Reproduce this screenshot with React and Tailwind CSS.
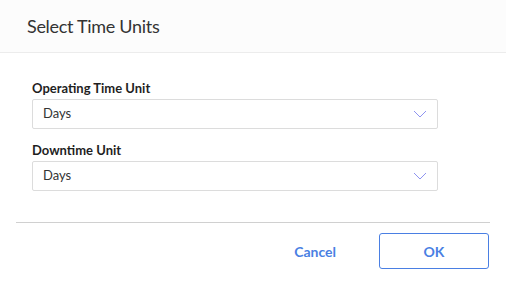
function UnitSelect({ label, value }) {
  return (
    <div className="flex flex-col">
      <div className="h-[17px] text-[13px] font-bold leading-[17px] text-[#1f1f1f]">{label}</div>
      <div className="mt-[2px] flex h-[30px] w-[406px] items-center justify-between rounded-[2px] border border-[#dcdcdc] bg-white pl-[10px] pr-[10px]">
        <span className="text-[13px] text-[#333]">{value}</span>
        <svg width="14" height="8" viewBox="0 0 14 8" fill="none" className="text-[#8e93f0]">
          <path d="M1 1l6 6 6-6" stroke="currentColor" strokeWidth="1" />
        </svg>
      </div>
    </div>
  )
}

export default function App() {
  return (
    <div className="h-[281px] w-[506px] bg-white" style={{ fontFamily: 'Lato, "Liberation Sans", sans-serif' }}>
      <div className="flex h-[53px] items-center border-b border-[#ececec] bg-[#fcfcfc] px-[27px]">
        <h1 className="text-[18px] tracking-[-0.3px] text-[#333]">Select Time Units</h1>
      </div>

      <div className="flex flex-col gap-[13px] px-[32px] pt-[27px]">
        <UnitSelect label="Operating Time Unit" value="Days" />
        <UnitSelect label="Downtime Unit" value="Days" />
      </div>

      <div className="mx-[16px] mt-[31px] border-t border-[#d0d0d0]" />

      <div className="flex items-center justify-end gap-[43px] px-[17px] pt-[10px]">
        <button type="button" className="text-[14px] font-bold text-[#4a7fe3]">Cancel</button>
        <button type="button" className="h-[36px] w-[110px] rounded-[3px] border border-[#4a7fe3] text-[14px] font-bold text-[#4a7fe3]">OK</button>
      </div>
    </div>
  )
}
